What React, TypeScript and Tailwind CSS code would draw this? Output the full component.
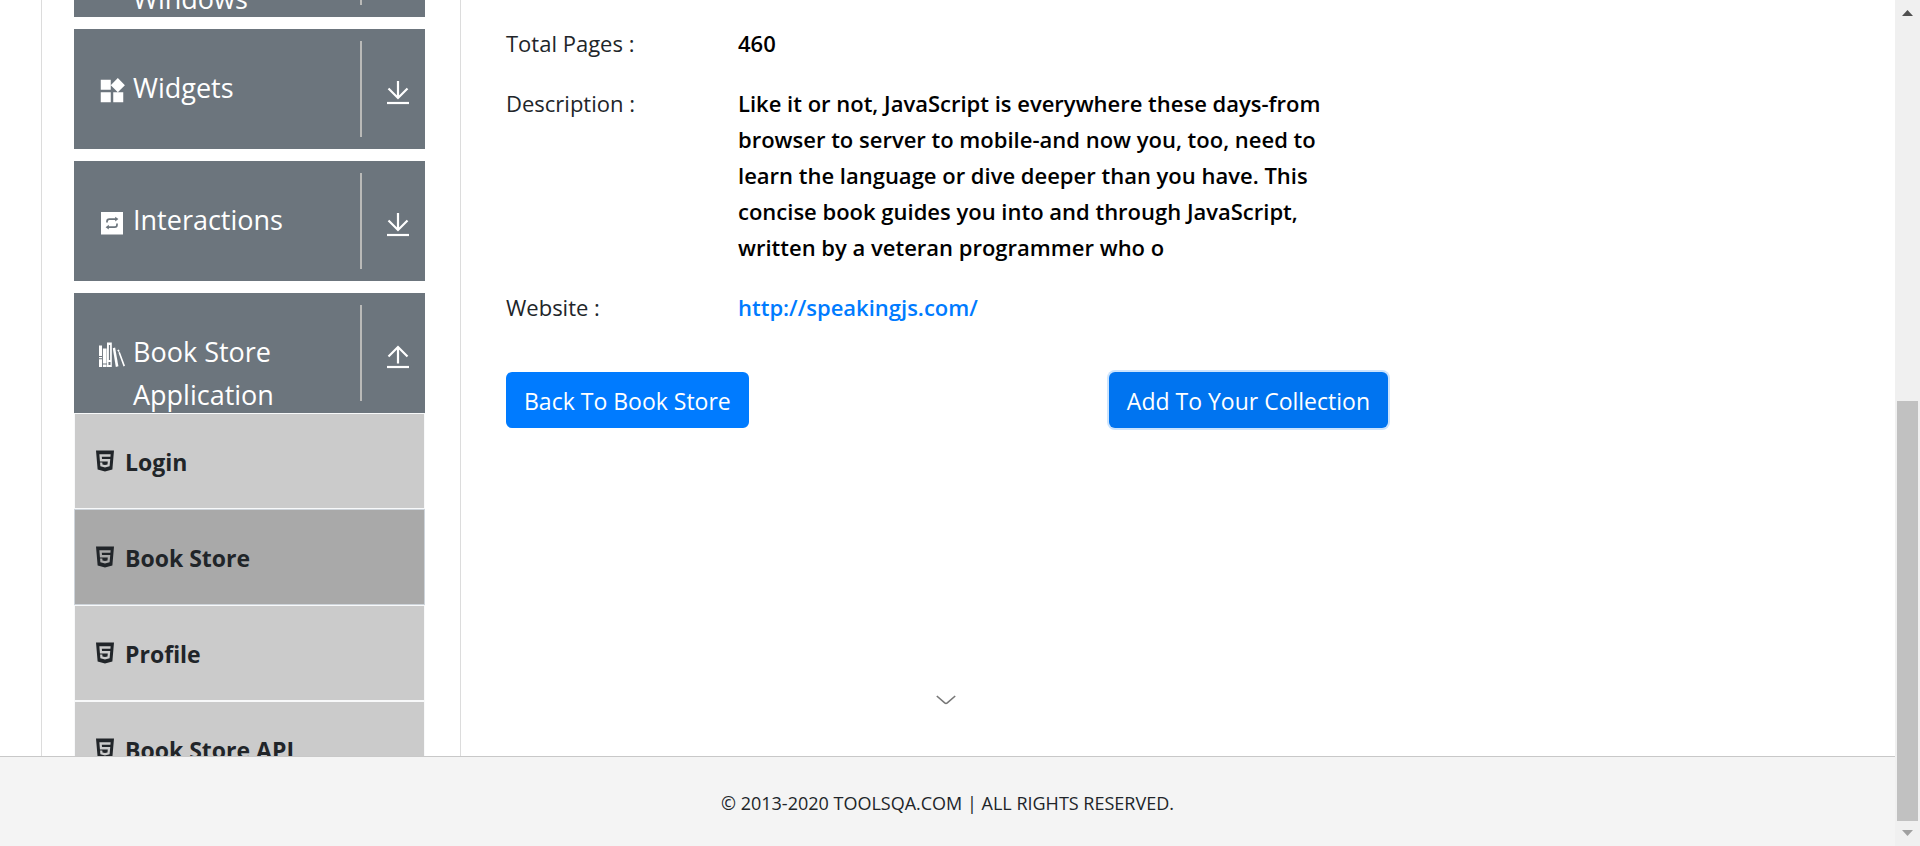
import React from "react";
import { MdWidgets } from "react-icons/md";
import { IoLogoHtml5 } from "react-icons/io5";

function InteractionsIcon() {
  return (
    <svg viewBox="0 0 30 30" className="size-[30px]" aria-hidden="true">
      <rect x="4" y="4" width="22" height="22.5" fill="#fff" />
      <g fill="none" stroke="#6c757d" strokeWidth="1.7">
        <path d="M10 14.500v-1q0-2.4 2.4-2.4H19" />
        <path d="M20 15.500v1.300q0 2.400-2.400 2.400H11" />
      </g>
      <path d="M18.200 8.700l3.200 2.400-3.200 2.400zM11.800 16.800l-3.200 2.400 3.200 2.400z" fill="#6c757d" />
    </svg>
  );
}

function BooksIcon() {
  return (
    <svg viewBox="0 0 30 30" className="size-[30px]" aria-hidden="true">
      <g fill="#fff">
        <path d="M2 5.500h3V16H2zM2 17h3v1.200H2zM2 19.200h3V27H2z" />
        <path d="M5.900 8.500h3.700v15H5.900zM5.900 24.600h3.700V27H5.900z" />
        <path fillRule="evenodd" d="M10 2.500h4.800V27H10zM11.900 5v15h1.200V5zM11.500 22v3h2v-3z" />
        <path d="M15.800 8.200l2.300-.6 3.300 18.700-2.600.7z" />
        <path d="M20.200 10.300l1.700-.8.800 1.700-1.300.7zM21.400 12.500l1.500-.6L28 25.800l-1.500.8z" />
      </g>
    </svg>
  );
}

function ArrowToLine({ up = false }: { up?: boolean }) {
  return (
    <svg viewBox="0 0 24 24" className="size-6 shrink-0" fill="none" stroke="#fff" strokeWidth="2.200" aria-hidden="true">
      {up ? <path d="M12 18.500V1.800M2.500 11.500L12 2l9.500 9.500" /> : <path d="M12 0v16.800M2.500 7.500L12 17l9.500-9.500" />}
      <path d="M1 22h22" />
    </svg>
  );
}

type GroupProps = { label: string; icon?: React.ReactNode; open?: boolean };

function GroupHeader({ label, icon, open }: GroupProps) {
  return (
    <button
      type="button"
      aria-expanded={!!open}
      className="flex h-[120px] w-full shrink-0 items-stretch overflow-hidden bg-[#6c757d] py-3 text-left text-[27px] leading-[43px] text-white"
    >
      <span className="flex min-w-0 flex-1 gap-[6px] pt-[25px] pl-[23px]">
        <span className="mt-[10px] size-[30px] shrink-0">{icon}</span>
        <span className="min-w-0 flex-1">{label}</span>
      </span>
      <span className="flex w-[65px] shrink-0 items-center justify-end border-l-2 border-[#babab8] pt-2 pr-[15px]">
        <ArrowToLine up={open} />
      </span>
    </button>
  );
}

function SubItem({ label, active }: { label: string; active?: boolean }) {
  return (
    <li>
      <a
        href="#"
        className={
          "flex h-24 items-center gap-2 border pl-[18px] text-[23px] leading-9 font-bold text-[#212529] " +
          (active ? "border-[#ced4da] bg-[#a9a9a9]" : "border-[#f8f9fa] bg-[#cbcbcb]")
        }
      >
        <IoLogoHtml5 className="size-6 shrink-0" />
        <span className="pt-0.5">{label}</span>
      </a>
    </li>
  );
}

function Row({ label, children }: { label: string; children: React.ReactNode }) {
  return (
    <div className="flex text-[22px] leading-9">
      <dt className="w-[232px] shrink-0 text-[#212529]">{label}</dt>
      <dd className="max-w-[610px] font-semibold text-black">{children}</dd>
    </div>
  );
}

export default function App() {
  return (
    <div className="flex h-screen overflow-hidden bg-white font-['Open_Sans','Noto_Sans',sans-serif]">
      <div className="relative flex min-w-0 flex-1 flex-col">
        <div className="flex min-h-0 flex-1 overflow-hidden">
          <aside className="ml-[41px] w-[420px] shrink-0 border-x border-[#dcdcdc] pr-[35px] pl-8">
            <nav className="-mt-[103px] flex flex-col gap-3">
              <GroupHeader label="Alerts, Frame & Windows" />
              <GroupHeader label="Widgets" icon={<MdWidgets className="size-[30px]" />} />
              <GroupHeader label="Interactions" icon={<InteractionsIcon />} />
              <div>
                <GroupHeader label="Book Store Application" icon={<BooksIcon />} open />
                <ul>
                  <SubItem label="Login" />
                  <SubItem label="Book Store" active />
                  <SubItem label="Profile" />
                  <SubItem label="Book Store API" />
                </ul>
              </div>
            </nav>
          </aside>
          <main className="min-w-0 flex-1 pt-[25px] pl-[45px]">
            <dl className="flex flex-col gap-6">
              <Row label="Total Pages :">460</Row>
              <Row label="Description :">
                Like it or not, JavaScript is everywhere these days-from browser to server to mobile-and now you, too,
                need to learn the language or dive deeper than you have. This concise book guides you into and through
                JavaScript, written by a veteran programmer who o
              </Row>
              <Row label="Website :">
                <a href="http://speakingjs.com/" className="text-[#007bff]">
                  http://speakingjs.com/
                </a>
              </Row>
            </dl>
            <div className="mt-[47px] flex max-w-[882px] justify-between text-[23px] leading-9 text-white">
              <button type="button" className="rounded-md bg-[#007bff] px-[18px] pt-[11px] pb-[9px]">
                Back To Book Store
              </button>
              <button type="button" className="rounded-md bg-[#0074f0] px-[18px] pt-[11px] pb-[9px] ring-2 ring-[#cce4fd]">
                Add To Your Collection
              </button>
            </div>
          </main>
        </div>
        <button type="button" aria-label="Collapse" className="absolute bottom-[136px] left-1/2 -ml-3 flex h-5 w-5 items-center justify-center">
          <svg viewBox="0 0 20 10" className="h-[10px] w-5" fill="none" stroke="#777" strokeWidth="1.600" aria-hidden="true">
            <path d="M.8 1l7.900 6.900q1.300 1 2.600 0L19.200 1" />
          </svg>
        </button>
        <footer className="flex h-[90px] shrink-0 items-center justify-center border-t border-[#c8c8c8] bg-[#f4f4f4] pt-0.5 text-lg text-[#212529]">
          <span>© 2013-2020 TOOLSQA.COM | ALL RIGHTS RESERVED.</span>
        </footer>
      </div>
      <div className="flex w-[25px] shrink-0 flex-col items-center bg-[#f0f0f0]" aria-hidden="true">
        <svg viewBox="0 0 11 6" className="mt-[10px] h-[6px] w-[11px]">
          <path d="M0 6L5.500 0 11 6z" fill="#505050" />
        </svg>
        <div className="mt-[385px] mb-[9px] w-[21px] flex-1 bg-[#c1c1c1]" />
        <svg viewBox="0 0 11 6" className="mb-[10px] h-[6px] w-[11px]">
          <path d="M0 0h11L5.500 6z" fill="#a0a0a0" />
        </svg>
      </div>
    </div>
  );
}
